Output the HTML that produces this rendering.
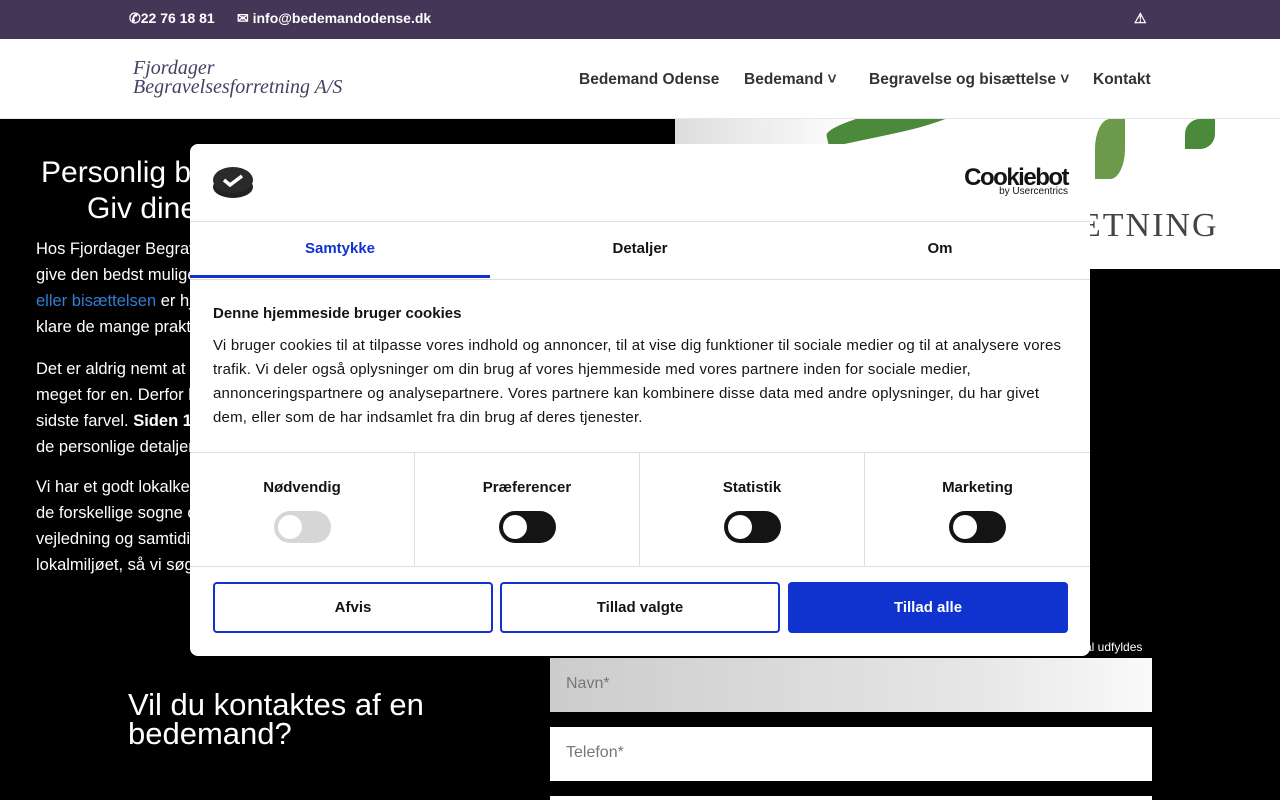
<!DOCTYPE html>
<html style="overflow:hidden"><head><meta charset="utf-8"><style>
*{margin:0;padding:0;box-sizing:border-box}
html,body{width:1280px;height:800px;overflow:hidden}
body{background:#000;font-family:"Liberation Sans",sans-serif;position:relative}
.top{position:absolute;left:0;top:0;width:1280px;height:39px;background:#433657;color:#fff;font-weight:bold;font-size:14px}
.top span{position:absolute;top:10px}
.hdr{position:absolute;left:0;top:39px;width:1280px;height:80px;background:#fff;border-bottom:1px solid #e6e6e6}
.logo{position:absolute;left:133px;top:20px;font-family:"Liberation Serif",serif;font-style:italic;color:#4a3d63;font-size:20px;line-height:19px}
.nav{position:absolute;top:32px;font-size:15.5px;font-weight:bold;color:#333}
.hero{position:absolute;left:675px;top:119px;width:605px;height:150px;background:linear-gradient(90deg,#ddd,#fff 30%,#fff);overflow:hidden}
.leaf{position:absolute;border-radius:50% 0;background:#4a8a3a}
.h1{position:absolute;color:#fff;font-size:30px;line-height:36px;white-space:nowrap}
.p{position:absolute;left:36px;width:640px;color:#fff;font-size:16.5px;line-height:26px}
.p a{color:#2f7fd6}
.modal{position:absolute;left:190px;top:144px;width:900px;height:512px;background:#fff;border-radius:8px;color:#141414}
.line{position:absolute;left:0;width:900px;height:1px;background:#ddd}
.tab{position:absolute;top:96px;width:300px;text-align:center;font-weight:bold;font-size:15px}
.cat{position:absolute;top:309px;height:114px;width:225px;border-right:1px solid #ddd;text-align:center;font-weight:bold;font-size:15px;padding-top:26px}
.tog{margin:15px auto 0;width:57px;height:32px;border-radius:16px;background:#141414;position:relative}
.tog:after{content:"";position:absolute;left:4px;top:4px;width:24px;height:24px;border-radius:50%;background:#fff}
.btn{position:absolute;top:438px;width:280px;height:51px;border:2px solid #1032cf;border-radius:4px;text-align:center;line-height:47px;font-weight:bold;font-size:15px}
.inp{position:absolute;left:550px;width:602px;height:54px;background:#fff;color:#777;font-size:16px;padding:17px 16px}
</style></head><body>
<div class="top"><span style="left:129px">✆22 76 18 81</span><span style="left:237px">✉ info@bedemandodense.dk</span><span style="left:1134px">⚠</span></div>
<div class="hdr">
<div class="logo">Fjordager<br>Begravelsesforretning A/S</div>
<div class="nav" style="left:579px">Bedemand Odense</div>
<div class="nav" style="left:744px">Bedemand ˅</div>
<div class="nav" style="left:869px">Begravelse og bisættelse ˅</div>
<div class="nav" style="left:1093px">Kontakt</div>
</div>
<div class="hero">
<div class="leaf" style="left:150px;top:-10px;width:140px;height:24px;transform:rotate(-12deg)"></div>
<div class="leaf" style="left:420px;top:0;width:30px;height:60px;background:#6a9a4a"></div>
<div class="leaf" style="left:510px;top:0;width:30px;height:30px"></div>
<div style="position:absolute;left:405px;top:88px;font-family:'Liberation Serif',serif;font-size:34px;color:#444;letter-spacing:2px">ETNING</div>
</div>
<div class="h1" style="top:155px;left:41px">Personlig bedemand i Odense</div>
<div class="h1" style="top:191px;left:87px">Giv dine kære et smukt farvel</div>
<div class="p" style="top:236px">Hos Fjordager Begravelsesforretning bestræber vi os på at<br>give den bedst mulige hjælp. Uanset om det er <a>begravelsen</a><br><a>eller bisættelsen</a> er hjælpen tilrettelagt, så vi sammen kan<br>klare de mange praktiske opgaver.</div>
<div class="p" style="top:356px">Det er aldrig nemt at tage afsked med en person, der har betydet<br>meget for en. Derfor hjælper vi jer gennem hele forløbet til det<br>sidste farvel. <b>Siden 1</b>980 har vi hjulpet familier med alle<br>de personlige detaljer.</div>
<div class="p" style="top:474px">Vi har et godt lokalkendskab og kender<br>de forskellige sogne og kirker. Vi giver<br>vejledning og samtidig er vi en del af<br>lokalmiljøet, så vi søger altid det bedste.</div>
<div style="position:absolute;left:1085px;top:640px;color:#fff;font-size:12px">al udfyldes</div>
<div style="position:absolute;left:128px;top:690px;color:#fff;font-size:31px;line-height:29px">Vil du kontaktes af en<br>bedemand?</div>
<div class="inp" style="top:658px;background:linear-gradient(90deg,#ccc,#e6e6e6 70%,#fafafa)">Navn*</div>
<div class="inp" style="top:727px">Telefon*</div>
<div class="inp" style="top:796px;height:4px;padding:0"></div>
<div class="modal">
<svg style="position:absolute;left:23px;top:22px" width="41" height="33" viewBox="0 0 41 33"><ellipse cx="20" cy="21" rx="20" ry="11" fill="#222"/><ellipse cx="20" cy="14" rx="20" ry="13" fill="#2a2a2a"/><path d="M11 14l6 5 12-9" stroke="#fff" stroke-width="3.5" fill="none"/></svg>
<div style="position:absolute;right:22px;top:20px;font-weight:bold;font-size:24px;letter-spacing:-1.5px">Cookiebot</div>
<div style="position:absolute;right:22px;top:42px;font-size:10px">by Usercentrics</div>
<div class="line" style="top:77px"></div>
<div class="tab" style="left:0;color:#1032cf">Samtykke</div>
<div style="position:absolute;left:0;top:131px;width:300px;height:3px;background:#1032cf"></div>
<div class="tab" style="left:300px">Detaljer</div>
<div class="tab" style="left:600px">Om</div>
<div class="line" style="top:135px"></div>
<div style="position:absolute;left:23px;top:161px;font-weight:bold;font-size:15px">Denne hjemmeside bruger cookies</div>
<div style="position:absolute;left:23px;top:190px;width:850px;font-size:15px;line-height:24px;letter-spacing:.2px">Vi bruger cookies til at tilpasse vores indhold og annoncer, til at vise dig funktioner til sociale medier og til at analysere vores trafik. Vi deler også oplysninger om din brug af vores hjemmeside med vores partnere inden for sociale medier, annonceringspartnere og analysepartnere. Vores partnere kan kombinere disse data med andre oplysninger, du har givet dem, eller som de har indsamlet fra din brug af deres tjenester.</div>
<div class="line" style="top:308px"></div>
<div class="cat" style="left:0">Nødvendig<div class="tog" style="background:#d6d6d6"></div></div>
<div class="cat" style="left:225px">Præferencer<div class="tog"></div></div>
<div class="cat" style="left:450px">Statistik<div class="tog"></div></div>
<div class="cat" style="left:675px;border:0">Marketing<div class="tog"></div></div>
<div class="line" style="top:422px"></div>
<div class="btn" style="left:23px">Afvis</div>
<div class="btn" style="left:310px">Tillad valgte</div>
<div class="btn" style="left:598px;background:#1032cf;color:#fff">Tillad alle</div>
</div>
</body></html>
